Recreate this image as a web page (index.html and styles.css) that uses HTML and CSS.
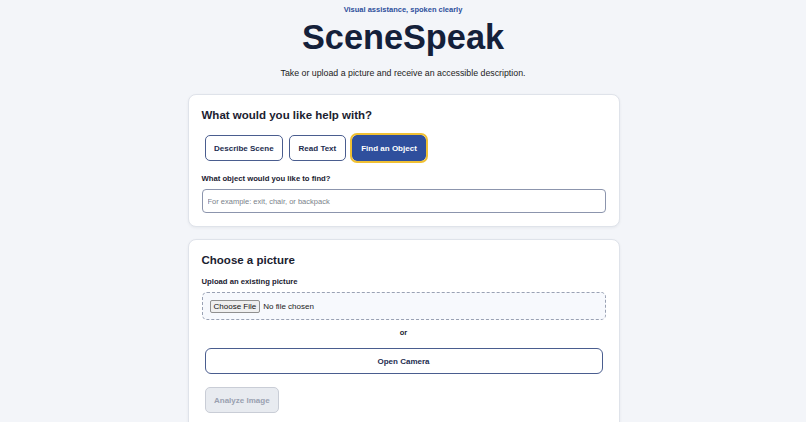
FILE: index.html
```html
<!DOCTYPE html>
<html lang="en">

<head>
    <meta charset="UTF-8">
    <meta name="viewport" content="width=device-width, initial-scale=1.0">
    <title>SceneSpeak</title>
    <link rel="stylesheet" href="styles.css">
</head>

<body>
    <!-- Header -->
    <header class="header">
        <p class="tagline">Visual assistance, spoken clearly</p>
        <h1>SceneSpeak</h1>
        <p class="intro">Take or upload a picture and receive an accessible description.</p>
    </header>

    <main class="main">
        <!-- Mode -->
        <section class="card">
            <h2>What would you like help with?</h2>
            <div class="modes">
                <button class="btn">Describe Scene</button>
                <button class="btn">Read Text</button>
                <button class="btn active">Find an Object</button>
            </div>
            <label class="label" for="object">What object would you like to find?</label>
            <input class="text-input" id="object" type="text" placeholder="For example: exit, chair, or backpack">
        </section>

        <!-- Picture -->
        <section class="card">
            <h2>Choose a picture</h2>
            <label class="label" for="upload">Upload an existing picture</label>
            <div class="dropzone">
                <input class="file-input" id="upload" type="file" accept="image/*">
            </div>
            <p class="or">or</p>
            <button class="btn wide">Open Camera</button>
            <button class="btn analyze" disabled>Analyze Image</button>
        </section>
    </main>
</body>

</html>
```

FILE: styles.css
```css
body {
    margin: 0;
    font-family: 'Liberation Sans', Arial, sans-serif;
    background-color: #f3f5f9;
    color: #1b2130;
}

.header {
    text-align: center;
    padding-top: 5px;
}

.tagline {
    margin: 0;
    font-size: 7.5px;
    font-weight: bold;
    color: #2d4f9c;
}

.header h1 {
    margin: 3px 0 0;
    font-size: 34.3px;
    line-height: 40px;
    color: #14203a;
}

.intro {
    margin: 11px 0 0;
    font-size: 8.8px;
    color: #222;
}

.main {
    width: 432px;
    margin: 16px auto 0;
    padding-left: 1px;
    display: flex;
    flex-direction: column;
    gap: 12px;
}

.card {
    background: #fff;
    border: 1px solid #dfe3ea;
    border-radius: 8px;
    padding: 13px;
    box-shadow: 0 1px 3px rgba(20, 32, 58, 0.06);
}

.card h2 {
    margin: 0;
    font-size: 11.5px;
    line-height: 14px;
    color: #1b2130;
}

.modes {
    display: flex;
    margin-top: 10px;
}

.btn {
    margin: 3px;
    height: 26px;
    padding: 0 8.5px;
    font-family: inherit;
    font-size: 8px;
    font-weight: bold;
    color: #1d2c4f;
    background: #fff;
    border: 1.5px solid #4a5d8f;
    border-radius: 5px;
    cursor: pointer;
}

.btn.active {
    background: #2f4f9d;
    border-color: #2f4f9d;
    color: #fff;
    outline: 2px solid #f0c033;
}

.label {
    display: block;
    margin-top: 10px;
    font-size: 7.7px;
    font-weight: bold;
    line-height: 9px;
    color: #1b2130;
}

.text-input {
    display: block;
    box-sizing: border-box;
    width: 100%;
    height: 24px;
    margin-top: 6px;
    padding: 0 5px;
    font-family: inherit;
    font-size: 7.5px;
    border: 1px solid #8c95ad;
    border-radius: 4px;
}

.text-input::placeholder {
    color: #7a7f8a;
}

.dropzone {
    box-sizing: border-box;
    height: 28px;
    margin-top: 6px;
    padding: 0 7px;
    display: flex;
    align-items: center;
    background: #f7f9fd;
    border: 1px dashed #9aa2b4;
    border-radius: 5px;
}

.file-input {
    font-family: inherit;
    font-size: 8px;
    color: #222;
}

.file-input::file-selector-button {
    font-family: inherit;
    font-size: 8px;
    padding: 1px 3px;
    margin-right: 3px;
    background: #efefef;
    border: 1px solid #8f8f8f;
    border-radius: 2px;
    color: #111;
}

.or {
    margin: 8px 0 0;
    text-align: center;
    font-size: 7.5px;
    font-weight: bold;
    line-height: 9px;
}

.btn.wide {
    display: block;
    width: calc(100% - 6px);
    margin-top: 11px;
    border-radius: 6px;
}

.btn.analyze {
    display: block;
    margin-top: 13px;
    background: #e8ebf0;
    border: 1px solid #c9cdd6;
    color: #9aa1b0;
    cursor: default;
}
```
